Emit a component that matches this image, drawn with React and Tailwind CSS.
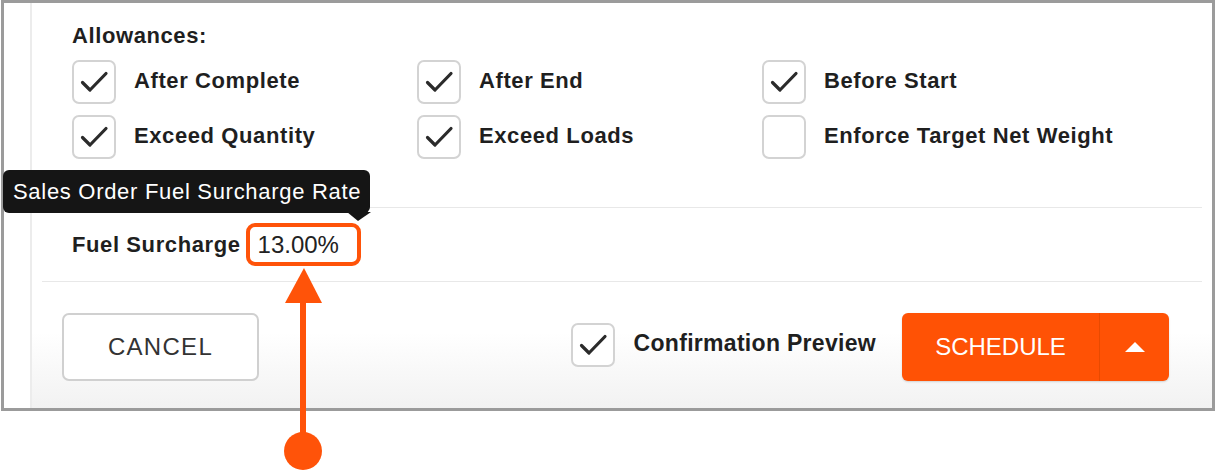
import React from "react";

const allowances = [
  { label: "After Complete", checked: true },
  { label: "After End", checked: true },
  { label: "Before Start", checked: true },
  { label: "Exceed Quantity", checked: true },
  { label: "Exceed Loads", checked: true },
  { label: "Enforce Target Net Weight", checked: false },
];

function CheckBox({ checked }) {
  return (
    <span className="flex h-11 w-11 shrink-0 items-center justify-center rounded-[7px] border-2 border-[#d3d3d3] bg-white">
      {checked && (
        <svg width="44" height="44" viewBox="0 0 44 44" className="-m-[2px]">
          <path
            d="M10.5 22.5 L18 30 L34 13.5"
            fill="none"
            stroke="#2b2b2b"
            strokeWidth="3.2"
            strokeLinecap="round"
            strokeLinejoin="round"
          />
        </svg>
      )}
    </span>
  );
}

export default function App() {
  return (
    <div className="relative h-[470px] w-[1216px] bg-white font-['Liberation_Sans',Arial,sans-serif] text-[#1f1f1f]">
      {/* Frame */}
      <div className="ml-px flex h-[411px] w-[1214px] border-[3px] border-[#9b9b9b] bg-white pl-[26px]">
        <div className="flex flex-1 flex-col border-l-2 border-[#ececec]">
          {/* Allowances */}
          <section className="pl-[40px] pt-[21px]">
            <h3 className="h-6 text-[22px] font-bold leading-6 tracking-[0.6px]">Allowances:</h3>
            <div className="mt-3 grid grid-cols-[345px_345px_1fr] gap-y-[11px]">
              {allowances.map((a) => (
                <label key={a.label} className="flex items-center gap-[18px]">
                  <CheckBox checked={a.checked} />
                  <span className="text-[22px] font-bold tracking-[0.6px] -mt-[3px]">{a.label}</span>
                </label>
              ))}
            </div>
          </section>

          <div className="mx-[10px] mt-[48px] h-px bg-[#e8e8e8]" />

          {/* Fuel surcharge */}
          <div className="flex h-[73px] items-center pl-[40px]">
            <span className="text-[22px] font-bold tracking-[0.6px]">Fuel Surcharge</span>
            <span className="ml-[5px] flex h-[43px] items-center rounded-[9px] border-4 border-[#ff5309] pl-2 pr-[18px] text-[24px] text-[#222]">
              13.00%
            </span>
          </div>

          <div className="mx-[10px] h-px bg-[#e8e8e8]" />

          {/* Actions */}
          <div className="flex flex-1 items-start justify-between bg-gradient-to-b from-white from-40% to-[#f2f2f2] pl-[30px] pr-[43px] pt-[31px]">
            <button className="flex h-[68px] w-[197px] items-center justify-center rounded-[7px] border-2 border-[#d0d0d0] bg-white text-[24px] tracking-[1.3px] text-[#333]">
              CANCEL
            </button>
            <div className="flex items-center">
              <label className="mb-[5px] mr-[26px] flex items-center gap-[19px]">
                <CheckBox checked />
                <span className="text-[23px] font-bold tracking-[0.3px] -mt-[3px]">Confirmation Preview</span>
              </label>
              <div className="flex h-[68px] overflow-hidden rounded-[6px] bg-[#ff5205] shadow-[0_1px_2px_rgba(0,0,0,0.15)]">
                <button className="flex w-[197px] items-center justify-center text-[24px] text-white">
                  SCHEDULE
                </button>
                <button className="flex w-[70px] items-center justify-center border-l border-[#e84a00]">
                  <svg width="20" height="10" viewBox="0 0 20 10">
                    <path d="M10 0 L20 10 L0 10 Z" fill="#fff" />
                  </svg>
                </button>
              </div>
            </div>
          </div>
        </div>
      </div>

      {/* Tooltip */}
      <div className="absolute left-[3px] top-[170px] flex h-[43px] w-[367px] items-center rounded-[6px] bg-[#151515] pl-[10px] text-[22px] tracking-[0.7px] text-white">
        Sales Order Fuel Surcharge Rate
        <svg className="absolute left-[344px] top-[42px]" width="24" height="9" viewBox="0 0 24 9">
          <path d="M0 0 L24 0 L11 9 Z" fill="#151515" />
        </svg>
      </div>

      {/* Annotation arrow */}
      <svg className="absolute left-[284px] top-[266px]" width="38" height="204" viewBox="0 0 38 204">
        <path d="M20 2 L38 37 L1 37 Z" fill="#ff5309" />
        <rect x="16" y="34" width="6" height="152" fill="#ff5309" />
        <circle cx="19" cy="185" r="19" fill="#ff5309" />
      </svg>
    </div>
  );
}
